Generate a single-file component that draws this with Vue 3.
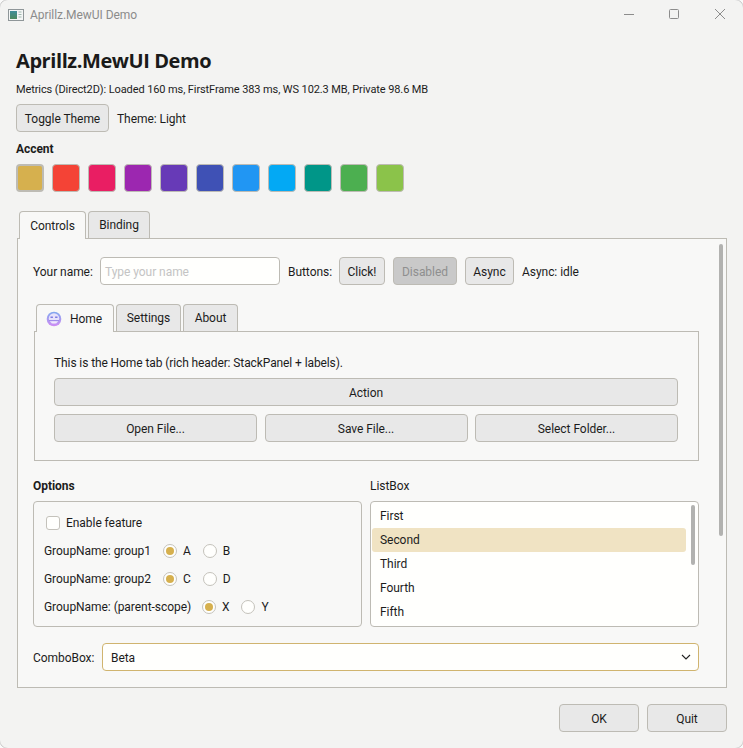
<script setup>
const swatches = ['#d6b04e','#f44336','#e91e63','#9c27b0','#673ab7','#3f51b5','#2196f3','#03a9f4','#009688','#4caf50','#8bc34a']
const list = ['First','Second','Third','Fourth','Fifth']
const groups = [
  { label: 'GroupName: group1', a: 'A', b: 'B', wide: false },
  { label: 'GroupName: group2', a: 'C', b: 'D', wide: false },
  { label: 'GroupName: (parent-scope)', a: 'X', b: 'Y', wide: true },
]
</script>

<template>
  <div class="window">
    <header class="titlebar">
      <svg class="appicon" width="16" height="14" viewBox="0 0 16 14">
        <defs>
          <linearGradient id="ai" x1="0" y1="0" x2="0" y2="1">
            <stop offset="0" stop-color="#3f8f9a"/>
            <stop offset="1" stop-color="#4c8a5e"/>
          </linearGradient>
        </defs>
        <rect x="0.5" y="1.5" width="15" height="11" fill="#f4f6f6" stroke="#8f9699"/>
        <rect x="2" y="3" width="7" height="8" fill="url(#ai)"/>
        <path d="M10.5 4h3M10.5 6.5h3M10.5 9h3" stroke="#9fb7ae"/>
      </svg>
      <span class="apptitle">Aprillz.MewUI Demo</span>
      <div class="winbtns">
        <svg width="10" height="10" viewBox="0 0 10 10"><path d="M0 5.5h10" stroke="#8c8c8c"/></svg>
        <svg width="10" height="10" viewBox="0 0 10 10"><rect x="0.5" y="0.5" width="9" height="9" rx="1" fill="none" stroke="#8c8c8c"/></svg>
        <svg class="closeicon" width="10" height="10" viewBox="0 0 10 10"><path d="M0 0l10 10M10 0L0 10" stroke="#8c8c8c"/></svg>
      </div>
    </header>

    <main class="content">
      <h1 class="title">Aprillz.MewUI Demo</h1>
      <div class="metrics">Metrics (Direct2D): Loaded 160 ms, FirstFrame 383 ms, WS 102.3 MB, Private 98.6 MB</div>
      <div class="row theme">
        <button class="btn toggle">Toggle Theme</button>
        <span>Theme: Light</span>
      </div>
      <div class="strong accent">Accent</div>
      <div class="swatches">
        <span v-for="(c, i) in swatches" :key="c" class="swatch" :class="{ on: i === 0 }" :style="{ background: c }"></span>
      </div>

      <div class="tabs outer">
        <div class="tab active t-controls">Controls</div>
        <div class="tab t-binding">Binding</div>
      </div>
      <section class="outerpanel">
        <div class="vscroll"></div>
        <div class="row namerow">
          <span class="lbl-name">Your name:</span>
          <div class="input">Type your name</div>
          <span class="lbl-buttons">Buttons:</span>
          <button class="btn click">Click!</button>
          <button class="btn disabled">Disabled</button>
          <button class="btn async">Async</button>
          <span>Async: idle</span>
        </div>

        <div class="innerwrap">
          <div class="tabs">
            <div class="tab active t-home">
              <svg class="face" width="16" height="16" viewBox="0 0 16 16">
                <defs>
                  <linearGradient id="fg" x1="0" y1="0" x2="0" y2="1">
                    <stop offset="0" stop-color="#7fa8ee"/>
                    <stop offset="1" stop-color="#d08cf4"/>
                  </linearGradient>
                </defs>
                <circle cx="8" cy="8" r="7.3" fill="url(#fg)"/>
                <circle cx="8" cy="7.4" r="5.2" fill="#e6e2fb"/>
                <path d="M4.5 6.2h2.4M9.1 6.2h2.4" stroke="#7d7be2" stroke-width="1.4"/>
                <path d="M3 9.6h10" stroke="#9c86e8" stroke-width="1.1"/>
                <path d="M5.5 11.5h5" stroke="#f3e6fd" stroke-width="1.6"/>
              </svg>
              <span>Home</span>
            </div>
            <div class="tab t-settings">Settings</div>
            <div class="tab t-about">About</div>
          </div>
          <div class="innerpanel">
            <div class="hometext">This is the Home tab (rich header: StackPanel + labels).</div>
            <button class="btn action">Action</button>
            <div class="threebtn">
              <button class="btn">Open File...</button>
              <button class="btn">Save File...</button>
              <button class="btn">Select Folder...</button>
            </div>
          </div>
        </div>

        <div class="columns">
          <div class="col">
            <div class="strong collabel">Options</div>
            <div class="box options">
              <label class="check"><span class="checkbox"></span><span>Enable feature</span></label>
              <div v-for="g in groups" :key="g.label" class="group">
                <span class="gname" :class="{ wide: g.wide }">{{ g.label }}</span>
                <span class="radio on"></span><span class="rlabel">{{ g.a }}</span>
                <span class="radio"></span><span>{{ g.b }}</span>
              </div>
            </div>
          </div>
          <div class="col">
            <div class="collabel">ListBox</div>
            <div class="box listbox">
              <div v-for="(item, i) in list" :key="item" class="item" :class="{ sel: i === 1 }">{{ item }}</div>
              <div class="listscroll"></div>
            </div>
          </div>
        </div>

        <div class="row comborow">
          <span class="lbl-combo">ComboBox:</span>
          <div class="combo">
            <span>Beta</span>
            <svg width="10" height="7" viewBox="0 0 10 7"><path d="M1 1l4 4 4-4" fill="none" stroke="#222" stroke-width="1.1"/></svg>
          </div>
        </div>
      </section>

      <footer class="footer">
        <button class="btn wide">OK</button>
        <button class="btn wide">Quit</button>
      </footer>
    </main>
  </div>
</template>

<style>
html, body { margin: 0; background: #fafafa; overflow: hidden; }
</style>

<style scoped>
.window {
  box-sizing: border-box;
  width: 743px;
  height: 748px;
  border-radius: 8px;
  outline: 1px solid #c8c8c8;
  background: #f3f3f2;
  color: #1c1c1c;
  font-family: Roboto, "Open Sans", sans-serif;
  font-size: 12px;
  line-height: 16px;
  letter-spacing: -0.05px;
  display: flex;
  flex-direction: column;
}
.titlebar { height: 30px; display: flex; align-items: center; padding-left: 8px; flex: none; }
.appicon { flex: none; }
.apptitle { margin-left: 6px; color: #8b8b8b; }
.winbtns { margin-left: auto; display: flex; gap: 35px; padding-right: 18px; padding-bottom: 2px; }
.closeicon { margin-left: 1px; }
.content { padding: 0 16px; display: flex; flex-direction: column; flex: 1; min-height: 0; }
.title { margin: 18px 0 0; font-family: "Open Sans", Roboto, sans-serif; font-size: 20px; line-height: 26px; font-weight: 700; letter-spacing: -0.42px; color: #1a1a1a; }
.metrics { margin-top: 8px; font-size: 11px; letter-spacing: -0.1px; }
.row { display: flex; align-items: center; }
.row > span { padding-top: 2px; }
.theme { margin-top: 6px; gap: 8px; }
.btn {
  box-sizing: border-box;
  height: 28px;
  padding: 1px 0 0;
  border: 1px solid #bdbbb4;
  border-radius: 4px;
  background: #e8e8e8;
  color: #1c1c1c;
  font: inherit;
  letter-spacing: inherit;
}
.toggle { width: 93px; }
.strong { font-weight: 700; }
.accent { margin-top: 9px; }
.swatches { display: flex; gap: 8px; margin-top: 7px; }
.swatch { box-sizing: border-box; width: 28px; height: 28px; border-radius: 4px; border: 1px solid #bdbbb4; }
.swatch.on { border-width: 2px; }
.tabs { display: flex; gap: 2px; height: 27px; position: relative; z-index: 1; }
.outer { margin-top: 19px; padding-left: 3px; }
.tab {
  box-sizing: border-box;
  height: 27px;
  border: 1px solid #bdbbb4;
  border-bottom: 0;
  border-radius: 4px 4px 0 0;
  background: #e8e8e8;
  display: flex;
  align-items: center;
  justify-content: center;
}
.tab.active { background: #f8f8f7; height: 28px; }
.t-controls { width: 67px; }
.t-binding { width: 62px; }
.t-home { width: 78px; gap: 8px; justify-content: flex-start; padding-left: 9px; }
.t-settings { width: 65px; }
.t-about { width: 55px; }
.outerpanel {
  box-sizing: border-box;
  position: relative;
  width: 710px;
  height: 450px;
  margin-left: 1px;
  padding: 18px 27px 0 15px;
  border: 1px solid #bdbbb4;
  background: #f8f8f7;
}
.vscroll { position: absolute; top: 5px; right: 3px; width: 4px; height: 292px; border-radius: 2px; background: #b2b2b0; }
.namerow { height: 28px; }
.lbl-name { width: 59px; white-space: nowrap; }
.input {
  box-sizing: border-box;
  width: 180px;
  height: 28px;
  margin-left: 8px;
  padding: 2px 4px 0;
  display: flex;
  align-items: center;
  border: 1px solid #bdbbb4;
  border-radius: 4px;
  background: #fffffd;
  color: #c4c4c4;
}
.lbl-buttons { margin-left: 8px; width: 43px; white-space: nowrap; }
.namerow .btn { margin-left: 8px; }
.namerow .btn + span { margin-left: 8px; }
.click { width: 46px; }
.disabled { width: 64px; background: #c9c9c9; color: #8f8f8f; }
.async { width: 49px; }
.innerwrap { margin-top: 19px; margin-left: 1px; }
.innerwrap .tabs { padding-left: 2px; }
.innerpanel {
  box-sizing: border-box;
  width: 665px;
  height: 130px;
  padding: 22px 20px 0 19px;
  border: 1px solid #bdbbb4;
  background: #f8f8f7;
}
.hometext { line-height: 16px; letter-spacing: -0.1px; padding-top: 1px; margin-bottom: -1px; }
.action { display: block; width: 624px; margin-top: 8px; }
.threebtn { display: grid; grid-template-columns: 203px 203px 203px; column-gap: 7.5px; margin-top: 8px; }
.columns { display: grid; grid-template-columns: 329px 329px; column-gap: 8px; margin-top: 17px; }
.collabel { height: 16px; margin-bottom: 7px; }
.box {
  box-sizing: border-box;
  height: 126px;
  border: 1px solid #bdbbb4;
  border-radius: 4px;
}
.options { padding: 13px 10px 0; background: #f8f8f7; }
.check { display: flex; align-items: center; gap: 6px; height: 16px; padding-left: 2px; }
.checkbox { box-sizing: border-box; width: 14px; height: 14px; border: 1px solid #c4c2bb; border-radius: 3px; background: #fffffd; }
.group { display: flex; align-items: center; height: 16px; margin-top: 12px; }
.gname { width: 109px; margin-right: 10px; white-space: nowrap; }
.gname.wide { width: 148px; }
.radio {
  box-sizing: border-box;
  width: 14px;
  height: 14px;
  margin-right: 6px;
  flex: none;
  border: 1px solid #c4c2bb;
  border-radius: 50%;
  background: #fffffd;
  display: inline-flex;
  align-items: center;
  justify-content: center;
}
.radio.on::after { content: ""; width: 8px; height: 8px; border-radius: 50%; background: #d6b04e; }
.rlabel { margin-right: 12px; }
.listbox { position: relative; padding: 2px 12px 0 1px; background: #fffffd; overflow: hidden; }
.item { height: 24px; line-height: 24px; padding-left: 8px; border-radius: 3px; }
.item.sel { background: #f0e3c3; }
.listscroll { position: absolute; top: 3px; right: 3px; width: 4px; height: 60px; border-radius: 2px; background: #b2b2b0; }
.comborow { margin-top: 16px; gap: 8px; }
.lbl-combo { width: 61px; white-space: nowrap; }
.combo {
  box-sizing: border-box;
  flex: none;
  width: 597px;
  height: 28px;
  padding: 0 7px 0 8px;
  display: flex;
  align-items: center;
  justify-content: space-between;
  border: 1px solid #d0b46f;
  border-radius: 4px;
  background: #fffffd;
}
.combo > span { padding-top: 2px; }
.footer { display: flex; justify-content: flex-end; gap: 8px; margin-top: 16px; }
.wide { width: 80px; }
</style>
